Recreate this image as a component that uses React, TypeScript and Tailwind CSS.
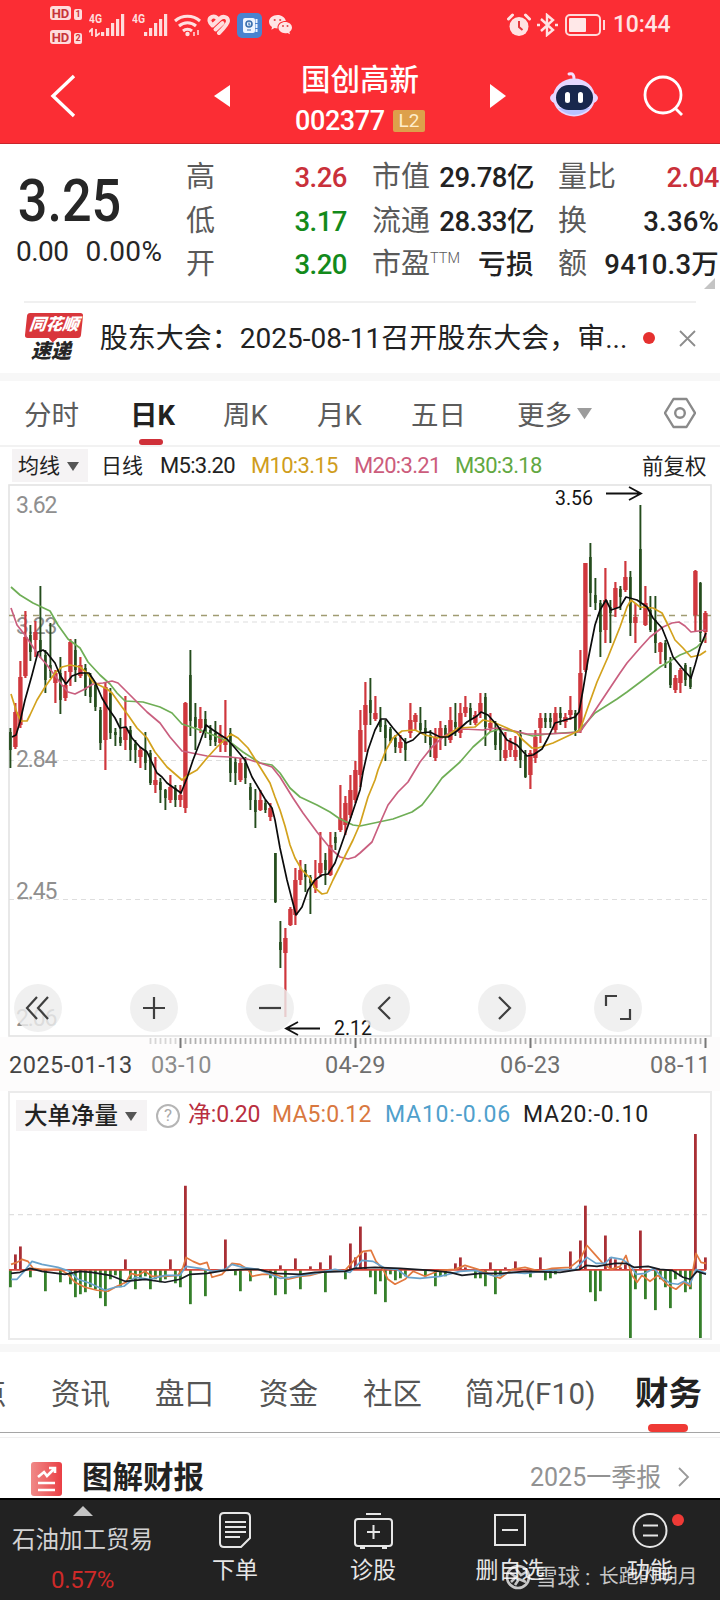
import React from 'react';

// [high, bodyTop, bodyBottom, low, up]
const candles = [
    [728, 732, 750, 768, 0], [703, 712, 747, 749, 1], [661, 677, 725, 728, 1], [611, 637, 676, 678, 1], [625, 635, 652, 661, 0],
    [621, 632, 640, 657, 1], [586, 640, 652, 658, 0], [650, 655, 680, 693, 0], [623, 665, 671, 678, 0], [670, 673, 683, 703, 1],
    [657, 673, 700, 714, 0], [671, 685, 698, 701, 1], [639, 642, 672, 686, 1], [639, 650, 670, 682, 0], [657, 665, 676, 678, 1],
    [664, 668, 690, 696, 0], [673, 677, 697, 703, 0], [682, 685, 707, 711, 0], [707, 710, 743, 750, 0], [682, 687, 740, 770, 1],
    [688, 693, 733, 739, 0], [728, 732, 735, 746, 0], [718, 737, 743, 746, 0], [696, 728, 740, 750, 1], [726, 730, 750, 761, 0],
    [740, 744, 750, 763, 0], [747, 750, 757, 768, 1], [732, 750, 763, 770, 0], [750, 753, 783, 785, 0], [757, 780, 785, 793, 1],
    [778, 782, 790, 803, 0], [789, 790, 798, 810, 0], [775, 787, 800, 803, 1], [785, 788, 800, 807, 0], [785, 795, 800, 807, 1],
    [702, 703, 808, 813, 1], [650, 675, 721, 736, 0], [703, 717, 727, 750, 0], [707, 719, 728, 733, 1], [711, 719, 733, 738, 0],
    [725, 730, 740, 746, 0], [721, 733, 742, 746, 0], [725, 735, 743, 752, 1], [700, 740, 745, 752, 1], [728, 733, 773, 782, 0],
    [758, 762, 773, 785, 0], [758, 763, 780, 782, 1], [757, 763, 778, 784, 0], [783, 787, 800, 810, 0], [789, 800, 812, 828, 0],
    [790, 800, 810, 811, 1], [800, 803, 810, 813, 0], [803, 808, 817, 821, 1], [853, 853, 902, 903, 0], [921, 942, 950, 968, 0],
    [928, 938, 953, 1017, 1], [907, 909, 925, 926, 1], [868, 880, 915, 925, 1], [860, 870, 880, 885, 1], [864, 870, 877, 892, 0],
    [875, 877, 883, 914, 0], [860, 880, 888, 893, 1], [832, 863, 873, 877, 1], [853, 860, 870, 885, 0], [832, 845, 875, 876, 1],
    [832, 837, 843, 850, 0], [785, 818, 830, 832, 1], [796, 803, 825, 835, 1], [775, 790, 815, 818, 1], [761, 770, 800, 803, 1],
    [710, 730, 775, 787, 1], [682, 705, 725, 752, 1], [678, 700, 713, 725, 0], [696, 713, 719, 721, 1], [707, 720, 727, 732, 0],
    [720, 725, 738, 761, 0], [727, 729, 741, 743, 0], [735, 738, 747, 753, 0], [735, 742, 748, 753, 1], [738, 742, 750, 761, 0],
    [703, 720, 733, 738, 1], [713, 715, 722, 730, 1], [707, 723, 730, 733, 0], [720, 728, 733, 743, 0], [730, 735, 745, 757, 0],
    [728, 737, 758, 761, 1], [721, 728, 737, 750, 1], [725, 728, 737, 746, 0], [707, 720, 740, 743, 1], [703, 722, 727, 736, 0],
    [703, 713, 733, 738, 1], [696, 707, 713, 717, 1], [703, 708, 720, 725, 0], [711, 715, 723, 725, 1], [693, 703, 713, 718, 1],
    [693, 697, 727, 746, 0], [713, 723, 728, 732, 1], [721, 730, 745, 750, 0], [727, 733, 750, 761, 0], [732, 750, 758, 761, 1],
    [738, 742, 750, 757, 1], [736, 750, 757, 761, 1], [730, 735, 760, 768, 0], [750, 755, 777, 778, 0], [750, 753, 775, 789, 1],
    [730, 737, 758, 763, 1], [713, 718, 728, 743, 1], [713, 718, 722, 728, 0], [713, 718, 722, 728, 0], [707, 713, 730, 733, 1],
    [707, 713, 718, 725, 0], [713, 717, 722, 728, 1], [696, 710, 715, 720, 1], [710, 713, 730, 736, 0], [650, 673, 730, 733, 1],
    [563, 563, 670, 672, 1], [543, 557, 593, 607, 0], [578, 595, 603, 610, 0], [600, 603, 632, 657, 0], [568, 600, 630, 643, 1],
    [600, 607, 613, 643, 0], [582, 588, 608, 617, 1], [586, 589, 597, 610, 0], [561, 577, 590, 592, 1], [571, 577, 623, 636, 0],
    [603, 617, 623, 643, 1], [505, 549, 602, 610, 0], [586, 603, 625, 626, 1], [596, 610, 630, 632, 0], [596, 620, 643, 653, 0],
    [642, 643, 652, 664, 1], [640, 643, 660, 668, 0], [657, 663, 685, 688, 0], [675, 678, 690, 693, 1], [668, 670, 683, 693, 1],
    [663, 665, 680, 686, 0], [667, 677, 687, 689, 0], [570, 571, 615, 632, 1], [582, 583, 633, 642, 0], [611, 613, 632, 643, 1],
];

const averages = [
    {
        color: '#6fae56',
        points: '11,587 20,595 33,603 50,611 58,625 68,639 80,648 88,662 100,675 110,684 117,693 125,701 143,702 160,707 172,713 182,724 197,729 213,735 230,742 243,752 260,763 272,765 280,773 290,788 300,797 317,805 330,812 340,819 353,825 360,826 393,819 412,812 422,805 432,792 442,778 460,762 473,747 490,732 500,729 517,732 533,736 547,734 577,732 587,722 595,713 617,699 627,692 643,680 660,667 680,655 690,651 697,647 706,638',
    },
    {
        color: '#c95f7f',
        points: '11,608 17,625 25,635 33,647 40,657 47,665 53,673 62,685 68,692 75,694 83,690 93,684 103,683 112,681 118,683 133,698 147,712 160,723 170,737 182,751 197,754 207,756 230,757 247,759 260,763 272,767 280,777 293,798 303,813 317,832 330,848 340,857 348,859 355,857 360,853 372,842 380,823 388,805 398,792 408,782 420,762 432,747 443,737 453,731 463,729 483,730 497,728 510,730 527,734 547,734 567,733 580,732 590,718 600,703 610,688 620,673 627,663 640,648 650,637 663,627 672,623 679,622 685,626 691,632 706,630',
    },
    {
        color: '#d3a21d',
        points: '11,694 17,713 21,721 27,721 30,715 37,700 45,687 55,673 62,667 70,665 80,667 87,673 93,682 107,689 112,693 122,707 128,715 137,728 147,738 155,752 167,767 182,780 188,775 197,770 207,758 217,747 231,734 238,738 248,748 260,767 270,783 275,797 280,810 285,826 290,845 295,858 302,870 310,878 315,888 322,894 327,893 333,880 343,860 353,840 360,824 368,797 375,780 378,770 386,750 393,738 402,731 415,730 425,735 437,738 447,736 458,728 475,727 483,720 493,722 507,728 517,733 523,740 532,748 538,748 553,743 570,735 580,730 588,707 597,682 608,657 620,627 627,607 631,600 640,607 653,608 662,613 668,625 675,640 683,648 691,657 700,655 706,651',
    },
    {
        color: '#0b0b0b',
        points: '12,737 16,735 20,722 25,700 32,675 38,652 43,650 47,653 55,663 60,675 66,684 72,676 80,673 89,673 95,682 102,698 108,708 115,718 120,728 126,727 132,738 140,747 147,752 157,773 162,777 167,783 181,793 187,778 193,760 200,742 206,725 213,730 222,736 227,739 235,748 245,760 252,777 265,799 272,808 275,820 280,848 287,880 296,915 302,907 308,890 315,880 322,875 328,874 335,863 343,840 350,820 360,790 363,772 368,750 375,730 381,719 386,719 393,728 399,735 406,743 413,740 420,733 430,732 440,737 448,737 457,731 467,722 477,716 481,712 488,715 497,725 507,740 517,745 527,756 533,755 542,749 548,738 555,723 562,721 575,717 579,712 583,690 588,660 595,625 600,610 606,600 611,610 620,607 626,597 637,600 647,607 653,618 662,628 668,643 673,657 682,668 691,678 695,665 700,647 706,633',
    },
];

const ZERO = 1270.5;

// [candle index, y of the bar's end]
const flows = [
    [0, 1288], [1, 1255], [2, 1247], [4, 1278], [7, 1292], [10, 1283], [12, 1285], [13, 1298], [14, 1295], [15, 1293], [16, 1288], [17, 1290],
    [18, 1299], [19, 1307], [20, 1280], [21, 1276], [22, 1288], [23, 1260], [24, 1280], [25, 1290], [26, 1280], [27, 1277], [28, 1290],
    [29, 1280], [30, 1283], [31, 1280], [32, 1260], [33, 1284], [34, 1288], [35, 1186], [36, 1305], [39, 1297], [43, 1240], [45, 1276],
    [46, 1292], [48, 1282], [52, 1279], [53, 1296], [54, 1266], [55, 1295], [57, 1259], [58, 1290], [60, 1267], [62, 1263], [63, 1293],
    [64, 1256], [67, 1280], [68, 1244], [69, 1258], [70, 1227], [71, 1253], [72, 1278], [73, 1295], [74, 1282], [75, 1303], [76, 1275],
    [77, 1281], [78, 1279], [79, 1277], [83, 1277], [85, 1287], [86, 1277], [87, 1277], [89, 1264], [90, 1258], [91, 1268], [93, 1279],
    [94, 1279], [95, 1287], [96, 1263], [97, 1295], [98, 1277], [99, 1268], [101, 1262], [104, 1278], [106, 1258], [107, 1281], [108, 1279],
    [109, 1275], [112, 1252], [114, 1241], [115, 1206], [116, 1293], [117, 1302], [118, 1292], [119, 1236], [120, 1258], [121, 1260],
    [122, 1268], [123, 1265], [124, 1339], [125, 1290], [126, 1231], [127, 1300], [129, 1311], [130, 1280], [131, 1288], [132, 1309],
    [133, 1280], [134, 1277], [135, 1293], [136, 1290], [137, 1134], [138, 1339], [139, 1258],
];

const flowAverages = [
    {
        color: '#e2793f',
        points: '11,1265 17,1263 22,1260 28,1262 33,1269 42,1270 60,1270 68,1275 75,1283 85,1288 97,1291 108,1292 117,1287 126,1283 131,1274 138,1276 145,1272 152,1277 165,1277 178,1276 183,1268 186,1258 193,1262 200,1265 207,1263 212,1278 222,1275 232,1264 240,1265 248,1270 252,1277 262,1275 275,1275 288,1280 300,1277 310,1276 325,1272 345,1271 355,1260 363,1252 371,1251 376,1262 383,1270 388,1280 395,1285 405,1280 413,1272 425,1277 440,1271 455,1270 465,1266 478,1270 490,1275 500,1279 512,1270 525,1268 540,1272 552,1269 570,1268 580,1260 587,1246 594,1254 602,1263 611,1270 620,1267 626,1256 632,1276 637,1283 642,1276 650,1282 658,1276 668,1286 676,1290 684,1283 690,1287 696,1254 701,1263 706,1264',
    },
    {
        color: '#6aa3cc',
        points: '11,1280 17,1280 25,1271 32,1262 42,1265 58,1268 70,1272 78,1280 90,1284 105,1291 115,1288 124,1287 135,1278 150,1280 165,1276 180,1276 186,1267 200,1269 213,1272 225,1270 232,1265 243,1268 258,1270 270,1275 280,1279 290,1278 302,1276 315,1274 335,1270 350,1273 362,1261 373,1262 385,1269 397,1270 408,1278 420,1279 440,1277 460,1272 475,1271 495,1277 510,1273 525,1274 550,1271 575,1270 587,1258 596,1264 605,1264 611,1258 622,1260 630,1265 636,1275 645,1274 654,1269 662,1278 670,1284 678,1285 684,1282 690,1285 696,1270 706,1274',
    },
    {
        color: '#181b22',
        points: '11,1274 20,1273 30,1269 42,1272 65,1275 80,1272 92,1273 110,1276 125,1282 145,1280 165,1283 180,1280 190,1275 207,1274 225,1271 245,1270 258,1270 275,1274 300,1275 315,1273 345,1272 355,1269 375,1268 400,1269 430,1271 450,1273 462,1276 480,1274 502,1274 525,1272 560,1273 580,1270 586,1266 597,1267 615,1264 626,1264 634,1268 648,1267 660,1270 672,1271 683,1278 690,1280 697,1272 706,1275',
    },
];

const at = (i: number) => 10.4 + i * 5;

function Down({ className = '' }: { className?: string }) {
    return (
        <svg viewBox="0 0 16 12" className={className} fill="currentColor">
            <path d="M0 0h16L8 12z" />
        </svg>
    );
}

function Signal() {
    return (
        <svg width="36" height="24" viewBox="0 0 36 24" fill="#ffdcdc">
            <text x="0" y="10" fontSize="12" fontWeight="700" fontFamily="Roboto" textLength="13" lengthAdjust="spacingAndGlyphs">4G</text>
            <path d="M12 19h3.200v4H12zM17 15h3.200v8H17zM22 10h3.200v13H22zM27 6h3.200v17H27zM32 1h3.200v22H32z" />
        </svg>
    );
}

function Sim({ n }: { n: string }) {
    return (
        <div className="flex items-end gap-[3px]">
            <span className="flex h-[14px] w-[21px] items-center justify-center rounded-[3px] bg-[#ffdcdc] text-[13px] leading-none font-bold text-[#c8343a]">HD</span>
            <span className="flex h-[11px] w-[8px] items-center justify-center rounded-[2px] bg-[#ffdcdc] text-[9px] leading-none font-bold text-[#c8343a]">{n}</span>
        </div>
    );
}

function StatusBar() {
    return (
        <div className="flex h-[50px] items-center pl-[50px] text-[#ffe3e3]">
            <div className="flex w-[39px] flex-col gap-[10px]">
                <Sim n="1" />
                <Sim n="2" />
            </div>
            <div className="relative w-[43px]">
                <Signal />
                <svg className="absolute bottom-0 left-0" width="11" height="9" viewBox="0 0 11 9" fill="none" stroke="#ffdcdc" strokeWidth="1.8">
                    <path d="M0 4l3-3v7M11 5L7 8V1" />
                </svg>
            </div>
            <div className="w-[42px]"><Signal /></div>
            <svg className="mr-[5px]" width="28" height="24" viewBox="0 0 28 24" fill="none" stroke="#ffe0e0" strokeWidth="3">
                <path d="M1 8a19 19 0 0 1 25 0M5 13a13 13 0 0 1 17 0M9 18a7 7 0 0 1 9 0" />
                <circle cx="13.500" cy="21" r="2.200" fill="#ffe0e0" stroke="none" />
                <path d="M20 19v4M24 17v5" strokeWidth="1.500" />
            </svg>
            <svg className="mr-[6px]" width="24" height="22" viewBox="0 0 24 22" fill="none" stroke="#ffdede" strokeWidth="4" strokeLinecap="round" strokeLinejoin="round">
                <path d="M10 4C7 1 2 3 2.500 7c.3 2 1.500 3 3 4.500L13 4.500c3-3 8-1.500 8 2.500 0 3-5 8-9 12" />
                <path d="M8.500 15.500L15.500 9" />
            </svg>
            <svg className="mr-[7px]" width="25" height="25" viewBox="0 0 25 25">
                <rect width="25" height="25" rx="5" fill="#4a83cf" />
                <rect x="6" y="5" width="12" height="15" rx="2" fill="#eef5ff" />
                <path d="M19.500 6v4M19.500 11v4M19.500 16v3" stroke="#eef5ff" strokeWidth="2" />
                <circle cx="12" cy="11" r="3" fill="none" stroke="#3a6fae" strokeWidth="1.600" />
                <path d="M12 9.500v2.500h1.500M10 17h4" stroke="#3a6fae" fill="none" strokeWidth="1.200" />
            </svg>
            <svg width="23" height="20" viewBox="0 0 23 20" fill="#ffe5e5">
                <path d="M8.500 0C3.700 0 0 3 0 6.800 0 9 1.200 10.800 3 12l-.6 2.700L5.500 13c1 .3 2 .4 3 .4C8 8.500 12 6 16.900 6 16 2.500 12.700 0 8.500 0z" />
                <path d="M16.200 7c-3.700 0-6.700 2.400-6.700 5.600s3 5.600 6.700 5.600c.8 0 1.600-.1 2.300-.3l2.500 1.400-.6-2.300c1.600-1 2.600-2.600 2.600-4.400C23 9.400 19.900 7 16.200 7z" />
                <g fill="#e0454a">
                    <circle cx="5.700" cy="5" r="1.100" /><circle cx="11.200" cy="5" r="1.100" /><circle cx="14" cy="11" r="1" /><circle cx="18.500" cy="11" r="1" />
                </g>
            </svg>
            <svg className="ml-[215px]" width="24" height="24" viewBox="0 0 24 24" fill="#ffe3e3">
                <circle cx="12" cy="13.500" r="9.500" />
                <path d="M1.500 6l4-4M22.500 6l-4-4" stroke="#ffe3e3" strokeWidth="3" strokeLinecap="round" />
                <path d="M12 8v6l3.500 3" stroke="#e2383d" strokeWidth="2" fill="none" />
            </svg>
            <svg className="ml-[6px]" width="21" height="24" viewBox="0 0 21 24" fill="none" stroke="#ffe3e3" strokeWidth="2.400">
                <path d="M4 6l12 11-6 5V2l6 5L4 18M0 12h3M18 12h3" />
            </svg>
            <svg className="ml-[7px]" width="41" height="22" viewBox="0 0 41 22" fill="none" stroke="#ffdada" strokeWidth="2">
                <rect x="1" y="1" width="34" height="20" rx="4" />
                <path d="M39 6v10" />
                <rect x="4" y="4" width="17" height="14" rx="1" fill="#ffe8e8" stroke="none" />
            </svg>
            <span className="ml-[7px] text-[23px] font-medium tracking-[-0.2px]">10:44</span>
        </div>
    );
}

function Header() {
    return (
        <header className="h-[144px] border-b border-[#c9252b] bg-[#fb2d34] text-white">
            <StatusBar />
            <div className="flex h-[92px] items-center pl-[50px]">
                <svg width="26" height="44" viewBox="0 0 26 44" fill="none" stroke="#fff" strokeWidth="3.400">
                    <path d="M24 2L3 22l21 20" />
                </svg>
                <svg className="ml-[138px]" width="16" height="22" viewBox="0 0 16 22" fill="#fff"><path d="M16 0v22L0 11z" /></svg>
                <div className="ml-[65px] w-[131px] pt-[7px]">
                    <h1 className="pl-[6px] text-[29.5px] leading-[40px] font-medium whitespace-nowrap">国创高新</h1>
                    <div className="mt-[3px] flex h-[36px] items-center gap-[9px]">
                        <span className="w-[89px] text-[27px] font-medium tracking-[-0.4px]">002377</span>
                        <span className="flex h-[22px] w-[32px] shrink-0 items-center justify-center rounded-[2px] bg-[#dda04b] text-[19px] text-[#ffeecb]">L2</span>
                    </div>
                </div>
                <svg className="ml-[64px]" width="16" height="24" viewBox="0 0 16 24" fill="#fff"><path d="M0 0v24l16-12z" /></svg>
                <svg className="-mt-[4px] ml-[44px]" width="48" height="46" viewBox="0 0 48 46">
                    <path d="M24 8c0-4-1-6-5-5" fill="none" stroke="#f4dfff" strokeWidth="3" strokeLinecap="round" />
                    <ellipse cx="24" cy="27" rx="24" ry="9" fill="#e9d5ff" />
                    <ellipse cx="24" cy="26.500" rx="21" ry="19" fill="#e6d8ff" />
                    <path d="M8 37q16 14 32 0" fill="#b8c2ff" />
                    <rect x="6" y="14" width="37" height="25" rx="12.500" fill="#18274d" />
                    <rect x="15" y="21" width="5" height="11" rx="2.500" fill="#fff" />
                    <rect x="28" y="21" width="5" height="11" rx="2.500" fill="#fff" />
                </svg>
                <svg className="ml-[45px]" width="42" height="42" viewBox="0 0 42 42" fill="none" stroke="#fff" strokeWidth="2.800">
                    <circle cx="20" cy="20" r="18" />
                    <path d="M32 33l7 7" />
                </svg>
            </div>
        </header>
    );
}

function Stat({ label, sup, value, className = 'tracking-[-0.5px]' }: { label: string; sup?: string; value: string; className?: string }) {
    return (
        <div className="flex h-[43.5px] items-center justify-between whitespace-nowrap">
            <span className="flex text-[29px] text-[#5a5a5a]">
                {label}
                {sup && <sup className="top-0 mt-px text-[14.5px] leading-[30px] font-light">{sup}</sup>}
            </span>
            <span className={`text-[27.5px] font-medium ${className}`}>{value}</span>
        </div>
    );
}

function Quote() {
    return (
        <section className="relative flex h-[157px] pt-[12px] pl-[16px]">
            <div className="w-[170px] whitespace-nowrap text-[#262626]">
                <div className="h-[76px] origin-left scale-x-[0.87] pt-[9px] pl-[2px] text-[60px] leading-[72px] font-medium">3.25</div>
                <div className="flex gap-[17px] text-[28px] leading-[40px] tracking-[0.300px]">
                    <span className="tracking-[-0.5px]">0.00</span>
                    <span>0.00%</span>
                </div>
            </div>
            <div className="w-[161px]">
                <Stat label="高" value="3.26" className="tracking-[-0.5px] text-[#c9303a]" />
                <Stat label="低" value="3.17" className="tracking-[-0.5px] text-[#138a1b]" />
                <Stat label="开" value="3.20" className="tracking-[-0.5px] text-[#138a1b]" />
            </div>
            <div className="ml-[25px] w-[162px] text-[#222]">
                <Stat label="市值" value="29.78亿" />
                <Stat label="流通" value="28.33亿" />
                <Stat label="市盈" sup="TTM" value="亏损" className="tracking-[0.500px]" />
            </div>
            <div className="ml-[24px] w-[161px] text-[#222]">
                <Stat label="量比" value="2.04" className="tracking-[-0.5px] text-[#c9303a]" />
                <Stat label="换" value="3.36%" className="tracking-[0.200px]" />
                <Stat label="额" value="9410.3万" className="tracking-[0.200px]" />
            </div>
            <svg className="absolute right-[5px] bottom-[12px]" width="11" height="11" viewBox="0 0 11 11" fill="#c4c4c4"><path d="M11 0v11H0z" /></svg>
        </section>
    );
}

function News() {
    return (
        <section className="mx-6 flex h-[72px] items-center border-t-2 border-[#f0f0f0] whitespace-nowrap">
            <div className="flex w-[60px] flex-col pt-px pl-[2px]">
                <div className="relative flex h-[25px] w-[56px] -skew-x-6 items-center justify-center rounded-[3px] bg-[#d9363b] text-[16.5px] font-black text-white italic">
                    同花顺
                    <i className="absolute -bottom-[3px] left-[25px] size-[7px] rotate-45 bg-[#d9363b]" />
                </div>
                <span className="pl-[5px] text-[20px] leading-[27px] font-black text-[#262626] italic">速递</span>
            </div>
            <p className="ml-[16px] w-[537px] pt-[2px] text-[28px] text-[#222]">股东大会：2025-08-11召开股东大会，审...</p>
            <i className="ml-[8px] size-[12px] shrink-0 rounded-full bg-[#e5302f]" />
            <svg className="ml-[24px] shrink-0" width="17" height="17" viewBox="0 0 17 17" stroke="#8c8c8c" strokeWidth="1.800"><path d="M1 1l15 15M16 1L1 16" /></svg>
        </section>
    );
}

function Periods() {
    return (
        <nav className="flex h-[66px] items-center border-b-2 border-[#f2f2f2] pl-[24px] text-[27.500px] leading-[40px] whitespace-nowrap text-[#5c5c5c]">
            <span className="w-[106px] pt-[5px]">分时</span>
            <span className="relative w-[93px] pt-[5px] font-bold text-[#222]">
                日K
                <i className="absolute top-[48px] left-[9px] h-[6px] w-[24px] rounded-full bg-[#cf3039]" />
            </span>
            <span className="w-[94px] pt-[5px]">周K</span>
            <span className="w-[94px] pt-[5px]">月K</span>
            <span className="w-[106px] pt-[5px]">五日</span>
            <span className="pt-[5px]">更多</span>
            <Down className="ml-[5px] h-[13px] w-[15px] text-[#9c9c9c]" />
            <svg className="ml-[72px]" width="32" height="32" viewBox="0 0 32 32" fill="none" stroke="#8a8a8a" strokeWidth="2.400" strokeLinejoin="round">
                <path d="M9.500 2h13L31 16l-8.500 14h-13L1 16z" />
                <circle cx="16" cy="16" r="4.800" />
            </svg>
        </nav>
    );
}

function Legend() {
    return (
        <div className="flex h-[37px] items-center pl-3 text-[21px] whitespace-nowrap text-[#222]">
            <span className="flex h-[33px] w-[76px] items-center gap-[7px] bg-[#f5f3f4] pt-[2px] pl-[6px]">
                均线
                <Down className="h-[9px] w-[12px] text-[#555]" />
            </span>
            <span className="ml-[13px] w-[59px] pt-[2px]">日线</span>
            <span className="w-[91px] text-[22px] tracking-[-0.7px]">M5:3.20</span>
            <span className="w-[103px] text-[22px] tracking-[-0.7px] text-[#cf9d1c]">M10:3.15</span>
            <span className="w-[101px] text-[22px] tracking-[-0.7px] text-[#cc5c7c]">M20:3.21</span>
            <span className="w-[187px] text-[22px] tracking-[-0.7px] text-[#62a842]">M30:3.18</span>
            <span className="pt-[3px] text-[21.5px]">前复权</span>
        </div>
    );
}

const controls = [
    'M23 13L13 24l10 11M34 13L24 24l10 11',
    'M13 24h22M24 13v22',
    'M13 24h22',
    'M28 13L17 24l11 11',
    'M21 13l11 11-11 11',
    'M12 22V12h11M36 25v10H26',
];

function KChart() {
    return (
        <div className="relative h-[553px]">
            <svg className="ml-2 block" width="704" height="553" viewBox="8 484 704 553" overflow="visible" fill="none">
                <rect x="9" y="485" width="702" height="551" stroke="#e3e3e3" strokeWidth="1.600" />
                <g stroke="#dedede" strokeWidth="1.200" strokeDasharray="5 4">
                    <path d="M9 622h702M9 760.500h702M9 899.500h702" />
                </g>
                <path d="M9 615.500h702" stroke="#a09c72" strokeWidth="1.500" strokeDasharray="6 6" />
                <g fill="#8f8f8f" fontSize="23" fontFamily="Roboto" className="tracking-[-1.100px]">
                    <text x="16" y="513">3.62</text>
                    <text x="16" y="634">3.23</text>
                    <text x="16" y="767">2.84</text>
                    <text x="16" y="899">2.45</text>
                    <text x="16" y="1026">2.06</text>
                </g>
                {candles.map(([h, top, bottom, l, up], i) => (
                    <g key={i} stroke={up ? '#cf373d' : '#244c1c'}>
                        <path d={`M${at(i)} ${h}V${l}`} strokeWidth={up ? 2.2 : 1.9} />
                        <path d={`M${at(i)} ${top}V${bottom}`} strokeWidth={up ? 4.4 : 2.6} />
                    </g>
                ))}
                {averages.map((m) => (
                    <polyline key={m.color} points={m.points} stroke={m.color} strokeWidth="1.700" strokeLinejoin="round" />
                ))}
                <g stroke="#111" strokeWidth="1.800">
                    <path d="M606 493.500h34M629 487l12 6.500-12 6.500" />
                    <path d="M320 1028.500h-34M298 1022l-12 6.500 12 6.500" />
                </g>
                <g fill="#151515" fontSize="19.500" fontFamily="Roboto">
                    <text x="555" y="505">3.56</text>
                    <text x="334" y="1035">2.12</text>
                </g>
            </svg>
            <div className="absolute bottom-[5px] left-[14px] flex gap-[68px]">
                {controls.map((d) => (
                    <svg key={d} width="48" height="48" viewBox="0 0 48 48" fill="none">
                        <circle cx="24" cy="24" r="24" fill="#ededed" fillOpacity="0.820" />
                        <path d={d} stroke="#3f3f3f" strokeWidth="2.200" />
                    </svg>
                ))}
            </div>
        </div>
    );
}

function Dates() {
    return (
        <div className="h-[54px] bg-[#fdfcfc]">
            <svg className="block" width="720" height="12" viewBox="0 0 720 12">
                {Array.from({ length: 112 }, (_, i) => {
                    const major = (i + 29) % 35 === 0;
                    return (
                        <path
                            key={i}
                            d={`M${150.5 + i * 5} 1v${major ? 10 : 6}`}
                            stroke={major ? '#777' : '#b0b0b0'}
                            strokeWidth={major ? 2 : 1.8}
                            opacity={i < 6 ? 0.5 : 1}
                        />
                    );
                })}
            </svg>
            <div className="flex pl-[9px] text-[23.500px] leading-[32px] whitespace-nowrap text-[#6f6f6f]">
                <span className="w-[142px] tracking-[0.500px] text-[#444]">2025-01-13</span>
                <span className="w-[174px] tracking-[0.300px] text-[#8c8c8c]">03-10</span>
                <span className="w-[175px] tracking-[0.300px]">04-29</span>
                <span className="w-[150px] tracking-[0.300px]">06-23</span>
                <span className="tracking-[0.300px]">08-11</span>
            </div>
        </div>
    );
}

function FlowChart() {
    return (
        <div className="mx-2 h-[249px] border-2 border-[#ebebeb]">
            <div className="flex h-[45px] items-center pl-[6px] text-[23px] whitespace-nowrap text-[#222]">
                <span className="flex h-[31px] w-[131px] items-center gap-[7px] bg-[#f5f3f4] pt-[2px] pl-[8px] text-[23.500px] font-medium">
                    大单净量
                    <Down className="h-[9px] w-[12px] text-[#555]" />
                </span>
                <span className="ml-[9px] flex size-[24px] items-center justify-center rounded-full border-2 border-[#b5b5b5] text-[17px] text-[#aaa]">?</span>
                <span className="ml-[8px] w-[84px] tracking-[-0.2px] text-[#b92f40]">净:0.20</span>
                <span className="w-[113px] tracking-[0.100px] text-[#d97840]">MA5:0.12</span>
                <span className="w-[138px] tracking-[0.800px] text-[#4fa0cc]">MA10:-0.06</span>
                <span className="tracking-[0.800px]">MA20:-0.10</span>
            </div>
            <svg className="-mx-[2px] block" width="704" height="200" viewBox="8 1138 704 201" preserveAspectRatio="none" overflow="visible" fill="none">
                <path d="M9 1215h702" stroke="#dfdfdf" strokeWidth="1.200" strokeDasharray="5 4" />
                {flows.map(([i, y]) => (
                    <path key={i} d={`M${at(i)} ${ZERO}V${y}`} stroke={y < ZERO ? '#a92f35' : '#357f2a'} strokeWidth="2.800" />
                ))}
                <path d={`M9 ${ZERO}h697`} stroke="#d8473c" strokeWidth="1.700" />
                {flowAverages.map((m) => (
                    <polyline key={m.color} points={m.points} stroke={m.color} strokeWidth="1.700" strokeLinejoin="round" />
                ))}
            </svg>
        </div>
    );
}

function InfoTabs() {
    return (
        <nav className="relative flex h-[81px] items-center overflow-hidden border-b border-[#a5a5a5] pt-[4px] text-[29.500px] whitespace-nowrap text-[#555]">
            <span className="-ml-[23px] w-[74px]">点</span>
            <span className="w-[104px]">资讯</span>
            <span className="w-[104px]">盘口</span>
            <span className="w-[104px]">资金</span>
            <span className="w-[102px]">社区</span>
            <span className="w-[170px] tracking-[0.300px]">简况(F10)</span>
            <span className="text-[33.500px] font-bold text-[#222]">财务</span>
            <i className="absolute bottom-0 left-[648px] h-[8px] w-[40px] rounded-[4px] bg-[#ef3a35]" />
        </nav>
    );
}

function Report() {
    return (
        <section className="mt-[4px] flex h-[61px] items-start border-t border-[#f0f0f0] pt-[18px] pl-[31px] whitespace-nowrap">
            <svg className="mt-[6px]" width="32" height="34" viewBox="0 0 32 34" fill="none">
                <defs>
                    <linearGradient id="report" x1="0" x2="1">
                        <stop offset="0" stopColor="#f08a88" />
                        <stop offset="1" stopColor="#ea3f45" />
                    </linearGradient>
                </defs>
                <rect width="31" height="34" rx="3" fill="url(#report)" />
                <path d="M7 15l6-5 3 4 7-7M18 6h6v5M7 21h17M7 28h17" stroke="#fff" strokeWidth="2.600" />
            </svg>
            <h2 className="mt-px ml-[19px] w-[448px] text-[30.500px] leading-[42px] font-bold text-[#222]">图解财报</h2>
            <span className="mt-px text-[25px] leading-[42px] text-[#929292]">2025一季报</span>
            <svg className="mt-[11px] ml-[17px]" width="12" height="20" viewBox="0 0 12 20" fill="none" stroke="#999" strokeWidth="1.800"><path d="M1 1l9 9-9 9" /></svg>
        </section>
    );
}

const actions = [
    { label: '下单', width: 'w-[136px]', icon: 'M5 1h22q4 0 4 4v21l-9 9H5q-4 0-4-4V5q0-4 4-4zM6 10h21M6 15h21M6 20h21M6 25h15' },
    { label: '诊股', width: 'w-[140px]', icon: 'M1 7h31q3 0 3 3v21q0 3-3 3H1q-3 0-3-3V10q0-3 3-3zM9 2h15M16.500 13v14M10 20h13M3 36h5M25 36h5' },
    { label: '删自选', width: 'w-[134px]', icon: 'M1 3h30v30H1zM8 18h16' },
    { label: '功能', width: 'w-[146px]', icon: 'M-.5 18.500a16.500 16.500 0 1 0 33 0a16.500 16.500 0 1 0-33 0M9 13.500h15M9 23.500h15' },
];

function BottomBar() {
    return (
        <footer className="relative flex h-[102px] overflow-hidden border-t-2 border-black bg-[#222] whitespace-nowrap text-[#e6e6e6]">
            <div className="flex w-[167px] shrink-0 flex-col items-center pr-[2px]">
                <svg className="mt-[6px]" width="20" height="10" viewBox="0 0 20 10" fill="#c4c4c4"><path d="M10 0l10 10H0z" /></svg>
                <span className="mt-[7px] text-[23.500px] leading-[34px] text-[#d2d2d2]">石油加工贸易</span>
                <span className="mt-[7px] text-[24px] leading-[32px] tracking-[-0.3px] text-[#cf2a29]">0.57%</span>
            </div>
            {actions.map((a) => (
                <div key={a.label} className={`flex shrink-0 flex-col items-center pt-[12px] ${a.width}`}>
                    <svg width="32" height="38" viewBox="0 0 32 38" overflow="visible" fill="none" stroke="#e6e6e6" strokeWidth="2"><path d={a.icon} /></svg>
                    <span className="mt-[4px] text-[23px] leading-[34px]">{a.label}</span>
                </div>
            ))}
            <i className="absolute top-[14px] left-[672px] size-[12px] rounded-full bg-[#ee3a36]" />
            <div className="absolute top-[61px] left-[505px] flex items-center text-[22.500px] leading-[32px] text-white/75">
                <svg className="mr-[4px]" width="26" height="26" viewBox="0 0 26 26" fill="none" stroke="currentColor" strokeWidth="2.600">
                    <circle cx="13" cy="13" r="11" />
                    <path d="M5 9l6 4-5 5M11 5l5 6 5-3M10 21l4-6 7 3" />
                </svg>
                <span>雪球</span>
                <span className="w-[19px] pl-[5px]">:</span>
                <span className="text-[19.700px]">长跑的明月</span>
            </div>
        </footer>
    );
}

export default function App() {
    return (
        <div className="h-[1600px] w-[720px] overflow-hidden bg-white font-['Roboto','Noto_Sans_CJK_SC',sans-serif]">
            <Header />
            <Quote />
            <News />
            <div className="h-2 bg-[#f7f7f7]" />
            <Periods />
            <Legend />
            <KChart />
            <Dates />
            <FlowChart />
            <div className="mt-1 h-2 bg-[#f7f7f7]" />
            <InfoTabs />
            <Report />
            <BottomBar />
        </div>
    );
}
